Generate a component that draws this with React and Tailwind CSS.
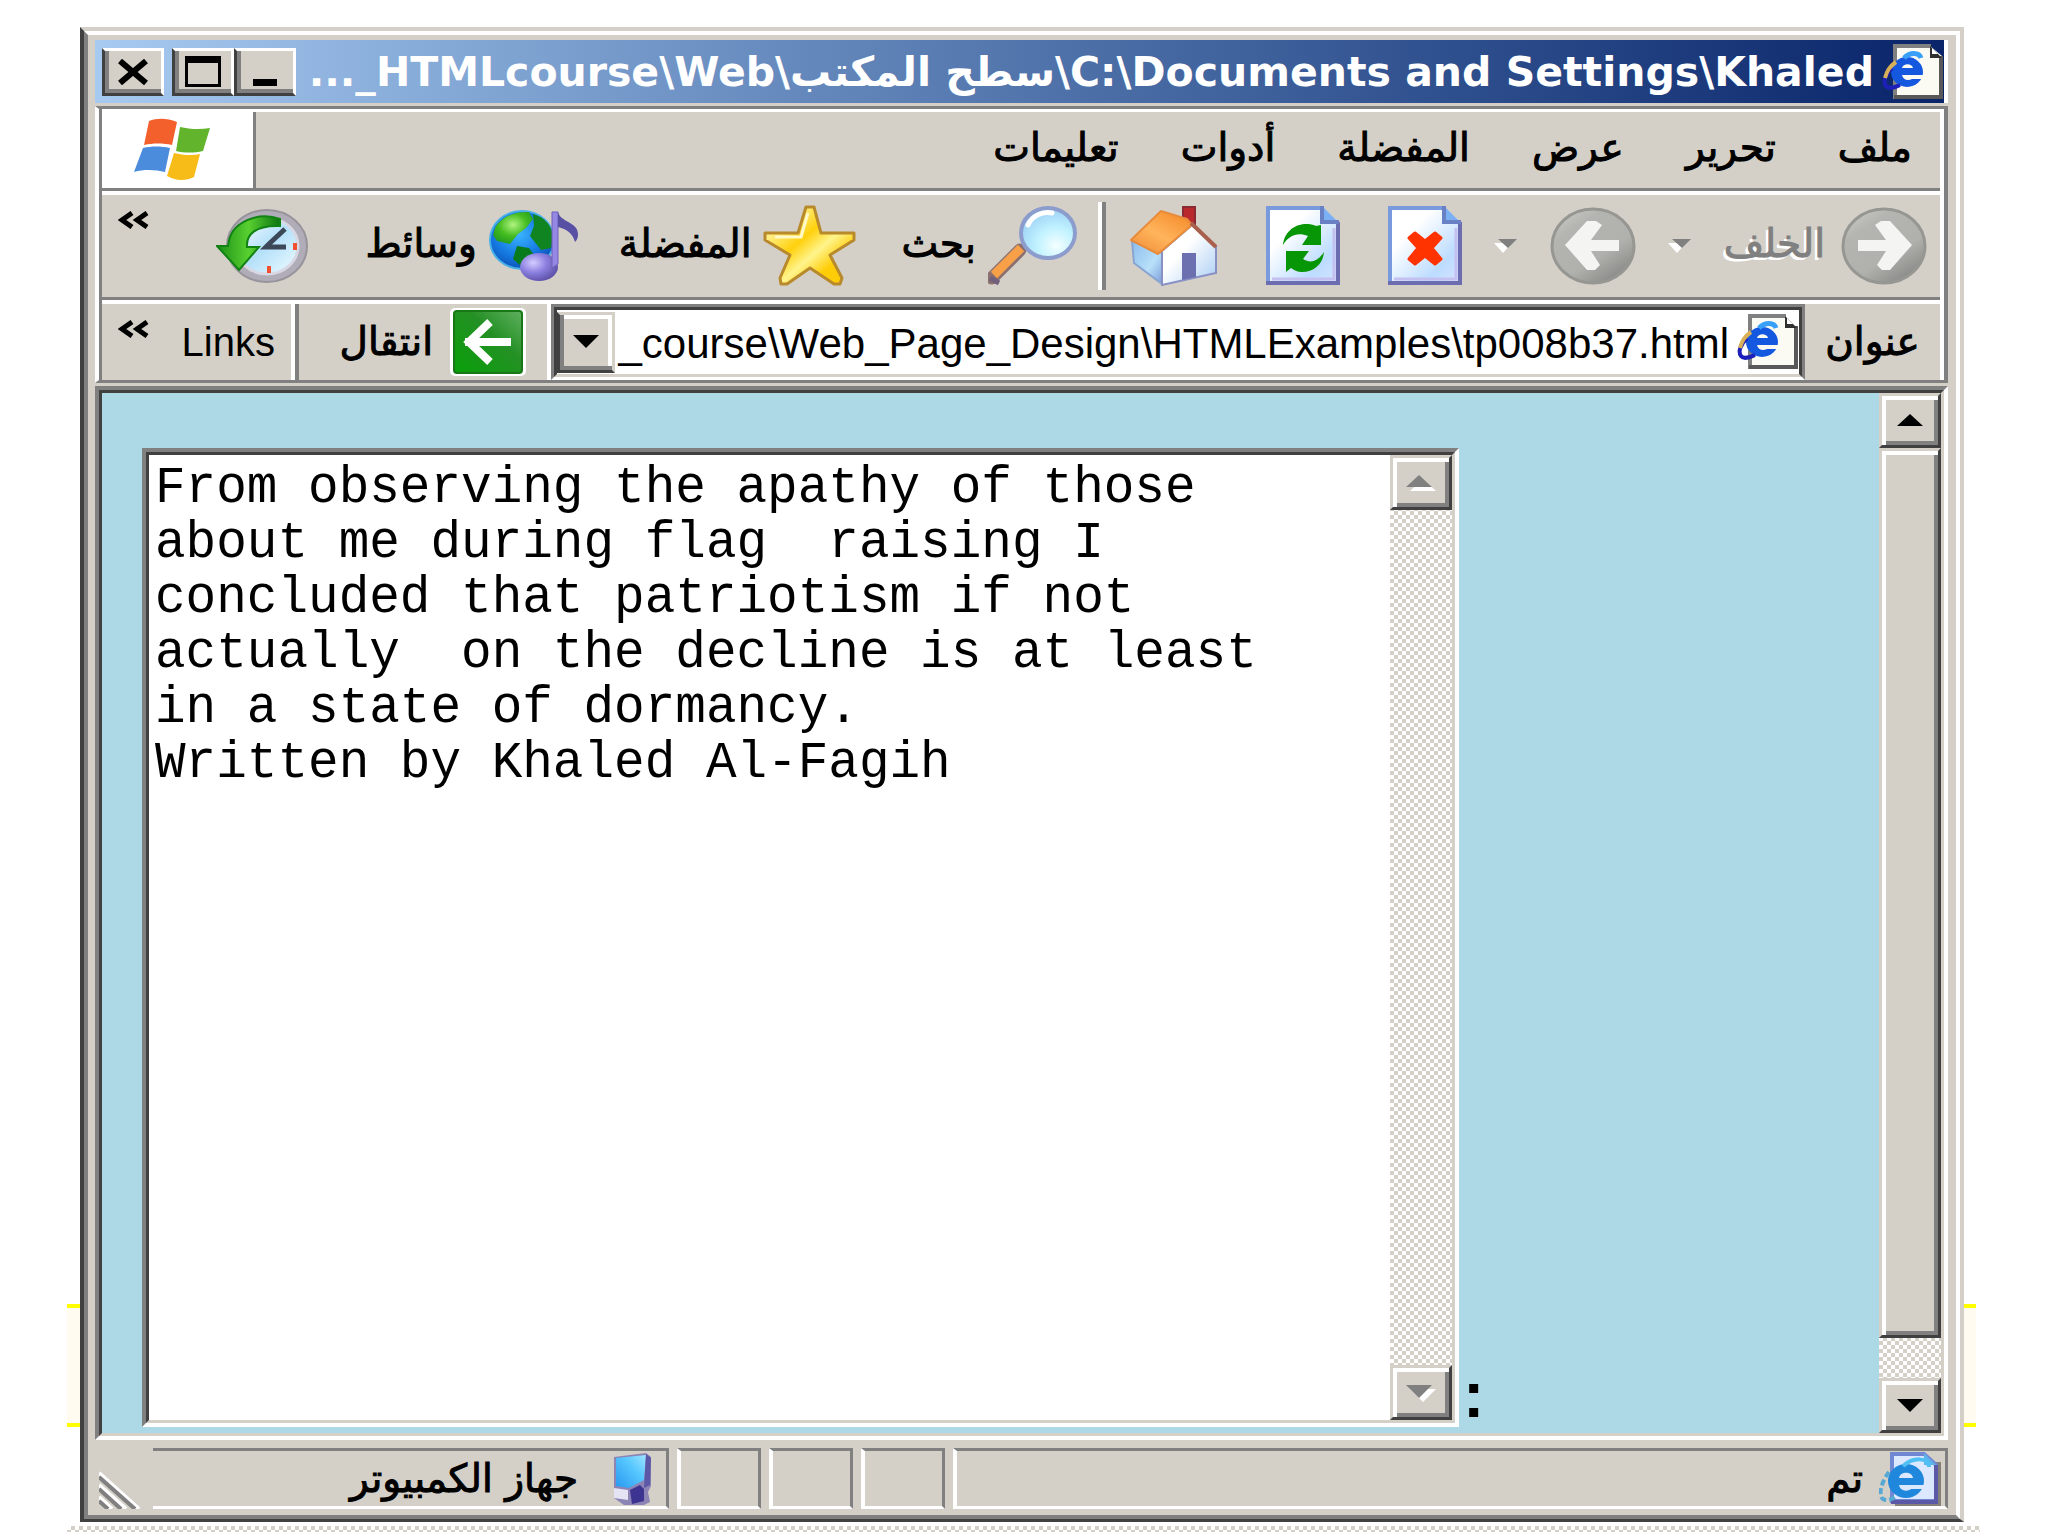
import React, { useState } from 'react';
import clsx from 'clsx';

const ESSAY = `From observing the apathy of those
about me during flag  raising I
concluded that patriotism if not
actually  on the decline is at least
in a state of dormancy.
Written by Khaled Al-Fagih`;

const TITLE = 'C:\\Documents and Settings\\Khaled\\سطح المكتب\\HTMLcourse\\Web_...';
const ADDRESS = '_course\\Web_Page_Design\\HTMLExamples\\tp008b37.html';
const MENUS = ['ملف', 'تحرير', 'عرض', 'المفضلة', 'أدوات', 'تعليمات'];

const CHECKER = 'bg-[conic-gradient(#d4d0c8_25%,#fff_25%_50%,#d4d0c8_50%_75%,#fff_75%)] bg-[length:8px_8px]';
const ARABIC = 'font-["DejaVu_Sans",sans-serif] text-[39px] leading-[44px] whitespace-nowrap [-webkit-text-stroke:1px]';

function ForwardIcon({ flip }) {
  const id = flip ? 'disc-l' : 'disc-r';
  return (
    <svg viewBox="0 0 86 80" className="h-[80px] w-[86px] shrink-0" aria-hidden="true">
      <defs>
        <linearGradient id={id} x1="0" y1="0" x2="0.7" y2="1">
          <stop offset="0" stopColor="#cfcfcb" />
          <stop offset="0.3" stopColor="#b4b4b0" />
          <stop offset="0.7" stopColor="#b0b0ac" />
          <stop offset="1" stopColor="#8a8a88" />
        </linearGradient>
      </defs>
      <ellipse cx="43" cy="40" rx="41" ry="37" fill={`url(#${id})`} stroke="#969692" strokeWidth="3" />
      <g transform={flip ? 'matrix(-1 0 0 1 86 0)' : undefined}>
        <path d="M17 34h28L34 19l6-4h9l22 24-22 25h-8l-5-5 9-14H17z" fill="#f4f4f2" />
      </g>
    </svg>
  );
}

function PageIcon({ id, children }) {
  return (
    <svg viewBox="0 0 74 80" className="h-[80px] w-[74px] shrink-0" aria-hidden="true">
      <defs>
        <linearGradient id={id} x1="0" y1="0" x2="1" y2="1">
          <stop offset="0.3" stopColor="#fff" />
          <stop offset="0.75" stopColor="#bcdcff" />
          <stop offset="1" stopColor="#d8e4ff" />
        </linearGradient>
      </defs>
      <path d="M2 2h54l16 14v61H2z" fill={`url(#${id})`} />
      <path d="M56 2H2v75" fill="none" stroke="#7a9ade" strokeWidth="4" />
      <path d="M0 77h72V16" fill="none" stroke="#6c6cb0" strokeWidth="4" />
      <path d="M6 73h62V22" fill="none" stroke="#c4c0f0" strokeWidth="3" />
      <path d="M56 0v17h17z" fill="#7cb0f4" />
      <path d="M56 0v16h17" fill="none" stroke="#6a80c4" strokeWidth="4" />
      {children}
    </svg>
  );
}

function StopIcon() {
  return (
    <PageIcon id="page-stop">
      <path d="M21 32l6-5 10 8 10-8 6 5-9 10 9 11-6 5-10-8-10 8-6-5 9-11z" fill="#ff3300" stroke="#ff3300" strokeWidth="3" strokeLinejoin="round" />
    </PageIcon>
  );
}

function RefreshIcon() {
  return (
    <PageIcon id="page-refresh">
      <path d="M17 39c1-13 12-22 25-21 3 0 6 1 8 2l5-1v20H36l6-9c-10-4-19-1-25 9z" fill="#069606" />
      <path d="M58 46c-1 12-10 20-22 20-5 0-8-2-11-4l-5 4V45h23l-6 8c8 5 15 2 21-7z" fill="#069606" />
    </PageIcon>
  );
}

function HomeIcon() {
  return (
    <svg viewBox="0 0 88 82" className="h-[82px] w-[88px] shrink-0" aria-hidden="true">
      <defs>
        <linearGradient id="roof" x1="0" y1="1" x2="0.8" y2="0">
          <stop offset="0" stopColor="#ef8a34" />
          <stop offset="0.5" stopColor="#ffb45c" />
          <stop offset="1" stopColor="#f58c2c" />
        </linearGradient>
        <linearGradient id="wall" x1="0" y1="0" x2="1" y2="1">
          <stop offset="0.4" stopColor="#fff" />
          <stop offset="1" stopColor="#a8ccf4" />
        </linearGradient>
        <linearGradient id="side" x1="0" y1="0" x2="1" y2="1">
          <stop offset="0" stopColor="#8cbcec" />
          <stop offset="0.6" stopColor="#b8e0fa" />
          <stop offset="1" stopColor="#7c9cd8" />
        </linearGradient>
      </defs>
      <path d="M2 36l30 12v31L4 58z" fill="url(#side)" stroke="#88a4d0" strokeWidth="2" />
      <path d="M62 20l24 22v26L32 80V46z" fill="url(#wall)" stroke="#8890c4" strokeWidth="2" />
      <path d="M53 2h12v20l-12-8z" fill="#b8282c" stroke="#8c2a34" strokeWidth="2" />
      <path d="M31 6l26 8 5 6-34 29L1 35z" fill="url(#roof)" stroke="#e88c3c" strokeWidth="2" strokeLinejoin="round" />
      <path d="M61 18l25 24" stroke="#a8604c" strokeWidth="4" />
      <path d="M52 48h14v24l-14 3z" fill="#6c70b0" />
    </svg>
  );
}

function SearchIcon() {
  return (
    <svg viewBox="0 0 90 82" className="h-[82px] w-[90px] shrink-0" aria-hidden="true">
      <defs>
        <radialGradient id="lens" cx="0.65" cy="0.75" r="0.8">
          <stop offset="0" stopColor="#f4ffff" />
          <stop offset="0.45" stopColor="#c0f2ff" />
          <stop offset="1" stopColor="#98ccf4" />
        </radialGradient>
      </defs>
      <path d="M4 73l28-28" stroke="#8c7070" strokeWidth="13" strokeLinecap="round" />
      <path d="M6 70l27-27" stroke="#f8a048" strokeWidth="9" />
      <path d="M2 73l9 5" stroke="#70607c" strokeWidth="5" />
      <ellipse cx="60" cy="28" rx="27" ry="25" fill="url(#lens)" stroke="#8c9ccc" strokeWidth="4" />
      <path d="M40 20c4-9 14-14 24-12" fill="none" stroke="#fff" strokeWidth="5" strokeLinecap="round" />
    </svg>
  );
}

function StarIcon() {
  return (
    <svg viewBox="0 0 94 82" className="h-[82px] w-[94px] shrink-0" aria-hidden="true">
      <defs>
        <linearGradient id="star" x1="0" y1="0" x2="1" y2="1">
          <stop offset="0.2" stopColor="#fff08c" />
          <stop offset="0.42" stopColor="#ffd00c" />
          <stop offset="0.58" stopColor="#fff48c" />
          <stop offset="0.75" stopColor="#ffcc08" />
        </linearGradient>
      </defs>
      <path d="M43 2h8l7 26h33v7L67 50l12 23-2 6h-6L47 63 24 79h-6l-1-6 10-23L2 35v-7h33z" fill="url(#star)" stroke="#b88a2c" strokeWidth="3" strokeLinejoin="round" />
      <path d="M45 8l-7 24H12" fill="none" stroke="#fff8c8" strokeWidth="3" />
    </svg>
  );
}

function MediaIcon() {
  return (
    <svg viewBox="0 0 90 72" className="h-[72px] w-[90px] shrink-0" aria-hidden="true">
      <defs>
        <radialGradient id="globe" cx="0.45" cy="0.4" r="0.65">
          <stop offset="0" stopColor="#3cb4ff" />
          <stop offset="0.6" stopColor="#1478e0" />
          <stop offset="1" stopColor="#0c4cb0" />
        </radialGradient>
        <radialGradient id="land" cx="0.5" cy="0.4" r="0.7">
          <stop offset="0" stopColor="#b0f480" />
          <stop offset="0.5" stopColor="#44bc20" />
          <stop offset="1" stopColor="#1c9420" />
        </radialGradient>
        <radialGradient id="note" cx="0.35" cy="0.35" r="0.7">
          <stop offset="0" stopColor="#d4ccff" />
          <stop offset="0.5" stopColor="#8c80e0" />
          <stop offset="1" stopColor="#5c50a8" />
        </radialGradient>
      </defs>
      <ellipse cx="33" cy="30" rx="32" ry="29" fill="url(#globe)" stroke="#48b0e8" strokeWidth="2" />
      <path d="M6 18C12 7 26 1 40 2l4 7-7 9-8 6-8 10-13-3-4-6z" fill="url(#land)" />
      <path d="M44 4c12 3 19 12 20 22l-2 12-10 2-11-14 4-10z" fill="#0f8420" />
      <path d="M28 36l12 2 6 8-14 10-8-7z" fill="#087c1c" />
      <ellipse cx="50" cy="57" rx="19" ry="14" fill="url(#note)" />
      <path d="M63 2h6v52l-6 4z" fill="#9488e4" stroke="#6c60b8" strokeWidth="1" />
      <path d="M69 2c2 10 20 10 20 22 0 4-1 6-3 8-2-8-8-13-17-15z" fill="#5850a4" />
    </svg>
  );
}

function HistoryIcon() {
  return (
    <svg viewBox="0 0 94 76" className="h-[76px] w-[94px] shrink-0" aria-hidden="true">
      <defs>
        <linearGradient id="clock" x1="0" y1="0" x2="1" y2="1">
          <stop offset="0" stopColor="#fff" />
          <stop offset="0.5" stopColor="#b4e0fa" />
          <stop offset="1" stopColor="#f0fcff" />
        </linearGradient>
        <linearGradient id="arrow" x1="0" y1="0" x2="1" y2="0">
          <stop offset="0" stopColor="#1c9018" />
          <stop offset="0.5" stopColor="#58d030" />
          <stop offset="1" stopColor="#0c7410" />
        </linearGradient>
      </defs>
      <ellipse cx="51" cy="38" rx="40" ry="36" fill="#b0acb8" stroke="#98949c" strokeWidth="2" />
      <ellipse cx="51" cy="38" rx="31" ry="28" fill="url(#clock)" stroke="#d8d8e4" strokeWidth="3" />
      <path d="M69 21L54 35l-4 4h20" fill="none" stroke="#3c4858" strokeWidth="5" />
      <path d="M79 35v7M53 58v7" stroke="#f05030" strokeWidth="4" />
      <path d="M64 11C44 4 14 12 12 38H1l22 24 20-23H31c-1-12 8-22 33-21z" fill="url(#arrow)" stroke="#128214" strokeWidth="2" />
    </svg>
  );
}

function WindowsFlag() {
  return (
    <svg viewBox="0 0 78 64" className="h-[64px] w-[78px]" aria-hidden="true">
      <path d="M16 3c8-3 18-3 28 1l-5 23c-9-2-19-2-28 0z" fill="#f4602c" />
      <path d="M47 9c9 2 19 3 30 1l-7 23c-9 2-19 2-27 0z" fill="#62b42c" />
      <path d="M10 30c8-2 18-2 27 0l-5 24c-9-2-20-3-31 0z" fill="#4c8cdc" />
      <path d="M41 35c8 2 18 3 26 1l-6 23c-8 4-18 4-27-1z" fill="#f8bc18" />
    </svg>
  );
}

function IePageIcon() {
  return (
    <svg viewBox="0 0 62 56" className="h-[56px] w-[62px] shrink-0" aria-hidden="true">
      <path d="M14 2h34l12 10v41H14z" fill="#fbfbf4" />
      <path d="M13 55V2h36" fill="none" stroke="#808080" strokeWidth="4" />
      <path d="M12 53h47V12" fill="none" stroke="#585858" strokeWidth="4" />
      <path d="M48 2v12h12z" fill="#303030" />
      <path d="M50 4v6h6z" fill="#fff" />
      <ellipse cx="25" cy="28" rx="16" ry="15" fill="#1458e0" />
      <path d="M20 24c1-5 10-5 11 0z" fill="#fbfbf4" />
      <path d="M20 31h22v4H30c-4 2-9 1-10-4z" fill="#fbfbf4" />
      <path d="M22 14c6-6 15-6 17 0" fill="none" stroke="#38a0f8" strokeWidth="5" />
      <path d="M10 24C3 31 1 38 4 42s9 1 14-1" fill="none" stroke="#1c20b8" strokeWidth="4" />
      <path d="M14 18C7 23 5 27 3 34" fill="none" stroke="#d8b058" strokeWidth="4" />
    </svg>
  );
}

function IeStatusIcon() {
  return (
    <svg viewBox="0 0 62 54" className="h-[54px] w-[62px] shrink-0" aria-hidden="true">
      <path d="M16 10h46v44H16z" fill="#848078" />
      <path d="M13 2h32l12 11v36H13z" fill="#dce8ff" stroke="#7088d4" strokeWidth="4" />
      <path d="M12 50h45V13" fill="none" stroke="#5c58a8" strokeWidth="4" />
      <path d="M45 1v12h12z" fill="#5cb4ec" />
      <ellipse cx="27" cy="29" rx="18" ry="17" fill="#2088dc" />
      <path d="M20 26c1-7 13-7 14 0z" fill="#dce8ff" />
      <path d="M20 33h26v4H32c-4 3-11 2-12-4z" fill="#dce8ff" />
      <path d="M24 14C34 5 50 5 50 15" fill="none" stroke="#50c0f4" strokeWidth="4" />
      <path d="M10 20C2 30-1 44 4 47s11-1 14-4" fill="none" stroke="#58a8d4" strokeWidth="4" strokeDasharray="6 3" />
    </svg>
  );
}

function ComputerIcon() {
  return (
    <svg viewBox="0 0 42 54" className="h-[54px] w-[42px] shrink-0" aria-hidden="true">
      <defs>
        <linearGradient id="screen" x1="0" y1="1" x2="1" y2="0">
          <stop offset="0" stopColor="#2898f0" />
          <stop offset="0.6" stopColor="#58c8ff" />
          <stop offset="1" stopColor="#a0e4ff" />
        </linearGradient>
      </defs>
      <path d="M2 5l32-4 5 4v29l-3 6 2 10-6 3H12L2 46z" fill="#8c84b4" />
      <path d="M4 6l30-3-2 25-15 8-13-2z" fill="url(#screen)" />
      <path d="M34 2l5 4-1 27-6 3z" fill="#5c58a8" />
      <path d="M2 36l14 2v10L2 46z" fill="#e4e4f4" />
      <path d="M18 38l10-5 4 4v12l-12 3z" fill="#3c3490" />
    </svg>
  );
}

function Chevrons() {
  return (
    <svg viewBox="0 0 32 18" className="h-[18px] w-[32px]" aria-hidden="true">
      <path d="M14 2L4 9l10 7M29 2L19 9l10 7" fill="none" stroke="#000" strokeWidth="5" />
    </svg>
  );
}

function Caret({ up, muted }) {
  const d = up ? 'M13 2l13 12H0z' : 'M0 2h26L13 15z';
  return (
    <svg viewBox="0 0 30 20" className="h-[20px] w-[30px] shrink-0" aria-hidden="true">
      {muted && <path d={d} fill="#fff" transform="translate(4 4)" />}
      <path d={d} fill={muted ? '#808080' : '#000'} transform={muted ? undefined : 'translate(2 1)'} />
    </svg>
  );
}

function MiniCaret() {
  return (
    <svg viewBox="0 0 24 16" className="h-[16px] w-[24px] shrink-0" aria-hidden="true">
      <path d="M0 5h18l-9 10z" fill="#fff" />
      <path d="M4 1h19l-9 9z" fill="#808080" />
    </svg>
  );
}

function CaptionButton({ label, className, children }) {
  return (
    <button
      aria-label={label}
      className={clsx(
        'flex h-12 w-[62px] border-[3px] border-t-white border-r-white border-b-[#404040] border-l-[#404040] bg-[#d4d0c8] shadow-[inset_4px_-4px_0_#808080]',
        className
      )}
    >
      {children}
    </button>
  );
}

function ScrollButton({ label, up, muted }) {
  return (
    <button
      aria-label={label}
      disabled={muted}
      className="flex h-[55px] w-full shrink-0 items-center justify-center border-[3px] border-t-[#d4d0c8] border-l-[#d4d0c8] border-r-[#404040] border-b-[#404040] bg-[#d4d0c8] shadow-[inset_4px_4px_0_#fff,inset_-4px_-4px_0_#808080]"
    >
      <Caret up={up} muted={muted} />
    </button>
  );
}

function TitleBar() {
  return (
    <header className="flex h-[63px] items-center border-r-4 border-white bg-linear-to-l from-[#0a246a] to-[#a6caf0] pl-[7px]">
      <IePageIcon />
      <h1 className="mr-2 min-w-0 flex-1 overflow-hidden whitespace-nowrap font-['DejaVu_Sans',sans-serif] text-[41px] leading-[52px] font-bold text-white">
        {TITLE}
      </h1>
      <div className="flex">
        <CaptionButton label="تصغير" className="items-end justify-center">
          <span className="mb-[7px] h-[7px] w-6 bg-black" />
        </CaptionButton>
        <CaptionButton label="تكبير" className="items-center justify-center">
          <span className="h-[31px] w-9 border-[3px] border-t-[7px] border-black" />
        </CaptionButton>
        <CaptionButton label="إغلاق" className="mr-2 items-center justify-center">
          <svg viewBox="0 0 32 26" className="h-[26px] w-[32px]" aria-hidden="true">
            <path d="M3 2l26 22M29 2L3 24" stroke="#000" strokeWidth="6" />
          </svg>
        </CaptionButton>
      </div>
    </header>
  );
}

function MenuBar() {
  return (
    <div className="flex h-[82px] border-t-[3px] border-b-[3px] border-t-white border-b-[#808080]">
      <nav className="flex flex-1 items-center border-l-[3px] border-[#808080] pr-7 pb-1">
        <ul className="flex gap-[62px]">
          {MENUS.map((item) => (
            <li key={item}>
              <button className={ARABIC}>{item}</button>
            </li>
          ))}
        </ul>
      </nav>
      <div className="flex w-[151px] items-center justify-center bg-white pr-3">
        <WindowsFlag />
      </div>
    </div>
  );
}

function Toolbar() {
  return (
    <div className="flex h-[109px] border-t-4 border-b-[3px] border-t-white border-b-[#808080] pr-[13px] pl-4">
      <div className="flex flex-1 items-center">
        <button disabled className="flex items-center gap-4">
          <ForwardIcon />
          <span className={clsx(ARABIC, 'pb-1 text-[#808080] [text-shadow:-3px_3px_0_#fff]')}>الخلف</span>
        </button>
        <button disabled aria-label="قائمة الخلف" className="mr-8"><MiniCaret /></button>
        <button disabled aria-label="الأمام" className="mr-8"><ForwardIcon flip /></button>
        <button disabled aria-label="قائمة الأمام" className="mr-8"><MiniCaret /></button>
        <button aria-label="إيقاف" className="mr-8"><StopIcon /></button>
        <button aria-label="تحديث" className="mr-12"><RefreshIcon /></button>
        <button aria-label="الصفحة الرئيسية" className="mr-12"><HomeIcon /></button>
        <div className="mr-6 h-[88px] w-2 border-l-4 border-r-4 border-l-white border-r-[#808080]" />
        <button className="mr-5 flex items-center gap-3">
          <SearchIcon />
          <span className={clsx(ARABIC, 'pb-1')}>بحث</span>
        </button>
        <button className="mr-11 flex items-center gap-3">
          <StarIcon />
          <span className={clsx(ARABIC, 'pb-1')}>المفضلة</span>
        </button>
        <button className="mr-10 flex items-center gap-3">
          <MediaIcon />
          <span className={clsx(ARABIC, 'pb-1')}>وسائط</span>
        </button>
        <button aria-label="محفوظات" className="mr-14"><HistoryIcon /></button>
      </div>
      <button aria-label="المزيد من الأدوات" className="self-start pt-4"><Chevrons /></button>
    </div>
  );
}

function AddressBar() {
  const [url, setUrl] = useState(ADDRESS);
  return (
    <div className="flex h-[80px] border-t-4 border-white">
      <label htmlFor="address" className={clsx(ARABIC, 'flex w-[135px] items-center justify-center')}>
        عنوان
      </label>
      <div className="flex min-w-0 flex-1 border-[3px] border-t-[#808080] border-r-[#808080] border-b-white border-l-[#808080]">
        <div className="flex min-w-0 flex-1 items-center border-[3px] border-t-[#404040] border-r-[#404040] border-b-[#d4d0c8] border-l-[#404040] bg-white">
          <IePageIcon />
          <input
            id="address"
            dir="ltr"
            value={url}
            onChange={(e) => setUrl(e.target.value)}
            className="mr-2 h-full min-w-0 flex-1 bg-transparent pt-1 text-right font-['Liberation_Sans',sans-serif] text-[42px] outline-none"
          />
          <button
            aria-label="عرض العناوين"
            className="flex h-[61px] w-[58px] shrink-0 items-center justify-center border-[3px] border-t-[#d4d0c8] border-r-[#d4d0c8] border-b-[#404040] border-l-[#404040] bg-[#d4d0c8] shadow-[inset_4px_-4px_0_#808080,inset_-4px_4px_0_#fff]"
          >
            <Caret />
          </button>
        </div>
      </div>
      <div className="flex w-[252px] items-center border-r-4 border-white pr-[20px]">
        <button className="flex items-center gap-4">
          <svg viewBox="0 0 78 70" className="h-[70px] w-[78px] shrink-0" aria-hidden="true">
            <defs>
              <linearGradient id="go" x1="0" y1="1" x2="1" y2="0">
                <stop offset="0" stopColor="#08a008" />
                <stop offset="0.6" stopColor="#249024" />
                <stop offset="1" stopColor="#60b060" />
              </linearGradient>
            </defs>
            <rect x="1" y="1" width="76" height="68" rx="5" fill="#fff" />
            <rect x="5" y="4" width="68" height="62" rx="3" fill="url(#go)" stroke="#187818" strokeWidth="2" />
            <path d="M16 35h46M41 15L20 35l21 20" fill="none" stroke="#fff" strokeWidth="8" />
          </svg>
          <span className={ARABIC}>انتقال</span>
        </button>
      </div>
      <div className="flex w-[197px] justify-between border-r-4 border-l-0 border-[#808080] pl-4">
        <div className="flex items-center border-r-4 border-white pr-4">
          <a href="#links" className="font-['Liberation_Sans',sans-serif] text-[40px] text-black">Links</a>
        </div>
        <button aria-label="المزيد من الارتباطات" className="self-start pt-4"><Chevrons /></button>
      </div>
    </div>
  );
}

function PageView() {
  const [text, setText] = useState(ESSAY);
  return (
    <main
      dir="ltr"
      className="mt-[3px] flex flex-1 border-4 border-t-[#808080] border-r-white border-b-white border-l-[#808080]"
    >
      <div className="flex flex-1 border-[3px] border-t-[#404040] border-r-[#d4d0c8] border-b-[#d4d0c8] border-l-[#404040] bg-[#add8e6]">
        <div className="flex flex-1 items-end pt-[55px] pr-1 pb-[6px] pl-10">
          <div className="flex w-[76%] self-stretch border-4 border-t-[#808080] border-l-[#808080] border-r-white border-b-white">
            <div className="flex flex-1 border-[3px] border-t-[#404040] border-l-[#404040] border-r-[#d4d0c8] border-b-[#d4d0c8] bg-white">
              <textarea
                aria-label="Essay"
                value={text}
                onChange={(e) => setText(e.target.value)}
                className="min-w-0 flex-1 resize-none overflow-hidden bg-white px-[6px] pt-[6px] font-['Liberation_Mono',monospace] text-[51px] leading-[55px] text-black outline-none"
              />
              <div className={clsx('flex w-[62px] flex-col justify-between', CHECKER)}>
                <ScrollButton label="Scroll text up" up muted />
                <ScrollButton label="Scroll text down" muted />
              </div>
            </div>
          </div>
          <span className="pb-1 pl-1 font-['Liberation_Sans',sans-serif] text-[64px] leading-[56px] font-bold">:</span>
        </div>
        <div className={clsx('flex w-[62px] flex-col', CHECKER)}>
          <ScrollButton label="Scroll page up" up />
          <div className="w-full flex-1 border-[3px] border-t-[#d4d0c8] border-l-[#d4d0c8] border-r-[#404040] border-b-[#404040] bg-[#d4d0c8] shadow-[inset_4px_4px_0_#fff,inset_-4px_-4px_0_#808080]" />
          <div className="h-10" />
          <ScrollButton label="Scroll page down" />
        </div>
      </div>
    </main>
  );
}

const PANEL = 'h-[61px] border-t-[3px] border-r-[3px] border-b-[3px] border-l-4 border-t-[#808080] border-r-[#808080] border-b-white border-l-white';

function StatusBar() {
  return (
    <footer className="flex items-end gap-2 pt-2 pb-[6px]">
      <div className={clsx(PANEL, 'flex flex-1 items-center gap-4 pr-1')}>
        <IeStatusIcon />
        <span className={ARABIC}>تم</span>
      </div>
      <div className={clsx(PANEL, 'w-[84px]')} />
      <div className={clsx(PANEL, 'w-[84px]')} />
      <div className={clsx(PANEL, 'w-[84px]')} />
      <div className="flex h-[61px] w-[516px] items-center gap-[34px] border-t-[3px] border-r-[3px] border-b-[3px] border-t-[#808080] border-r-[#808080] border-b-white pr-3">
        <ComputerIcon />
        <span className={ARABIC}>جهاز الكمبيوتر</span>
      </div>
      <svg viewBox="0 0 42 38" className="mr-1 ml-1 h-[38px] w-[42px]" aria-hidden="true">
        <path d="M0 2l40 36M0 14l27 24M0 26l13 12" stroke="#fff" strokeWidth="4" />
        <path d="M0 6l36 32M0 18l22 20M0 30l9 8" stroke="#808080" strokeWidth="4" />
      </svg>
    </footer>
  );
}

export default function App() {
  return (
    <div className="relative flex min-h-screen flex-col bg-white text-black">
      <div className="absolute right-[72px] bottom-[109px] left-[67px] h-[123px] border-t-4 border-b-4 border-[#ffff00] bg-[#fffbf0]" />
      <div
        dir="rtl"
        className="relative mt-[27px] mr-[84px] ml-[80px] flex flex-1 flex-col border-t-4 border-r-4 border-b-[3px] border-l-4 border-t-[#d4d0c8] border-r-[#d4d0c8] border-b-[#404040] border-l-[#404040]"
      >
        <div className="flex flex-1 flex-col border-4 border-t-white border-r-white border-b-[#808080] border-l-[#808080] bg-[#d4d0c8] pt-[5px] pr-2 pl-[7px]">
          <TitleBar />
          <section className="mt-[3px] border-[3px] border-r-4 border-l-4 border-t-[#808080] border-r-[#808080] border-b-[#808080] border-l-white">
            <div className="border-r-4 border-l-[3px] border-r-white border-l-[#808080]">
              <MenuBar />
              <Toolbar />
              <AddressBar />
            </div>
          </section>
          <PageView />
          <StatusBar />
        </div>
      </div>
      <div className={clsx('mt-1 mr-[68px] mb-1 ml-[67px] h-[6px]', CHECKER)} />
    </div>
  );
}
